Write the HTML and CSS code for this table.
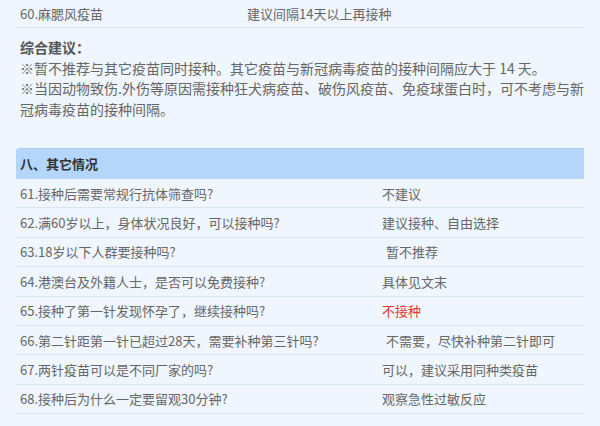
FILE: index.html
```html
<!DOCTYPE html>
<html lang="zh-CN">
<head>
<meta charset="utf-8">
<link rel="stylesheet" href="styles.css">
</head>
<body>
<div class="page">
  <div class="row row-top">
    <div class="q">60.麻腮风疫苗</div>
    <div class="a">建议间隔14天以上再接种</div>
  </div>
  <div class="advice">
    <div class="advice-title">综合建议：</div>
    <p>※暂不推荐与其它疫苗同时接种。其它疫苗与新冠病毒疫苗的接种间隔应大于 14 天。</p>
    <p>※当因动物致伤.外伤等原因需接种狂犬病疫苗、破伤风疫苗、免疫球蛋白时，可不考虑与新冠病毒疫苗的接种间隔。</p>
  </div>
  <div class="section-head">八、其它情况</div>
  <div class="table">
    <div class="row"><div class="q">61.接种后需要常规行抗体筛查吗?</div><div class="a">不建议</div></div>
    <div class="row"><div class="q">62.满60岁以上，身体状况良好，可以接种吗?</div><div class="a">建议接种、自由选择</div></div>
    <div class="row"><div class="q">63.18岁以下人群要接种吗?</div><div class="a indent">暂不推荐</div></div>
    <div class="row"><div class="q">64.港澳台及外籍人士，是否可以免费接种?</div><div class="a">具体见文末</div></div>
    <div class="row"><div class="q">65.接种了第一针发现怀孕了，继续接种吗?</div><div class="a red">不接种</div></div>
    <div class="row"><div class="q">66.第二针距第一针已超过28天，需要补种第三针吗?</div><div class="a indent">不需要，尽快补种第二针即可</div></div>
    <div class="row"><div class="q">67.两针疫苗可以是不同厂家的吗?</div><div class="a">可以，建议采用同种类疫苗</div></div>
    <div class="row"><div class="q">68.接种后为什么一定要留观30分钟?</div><div class="a">观察急性过敏反应</div></div>
  </div>
</div>
</body>
</html>
```

FILE: styles.css
```css
html, body {
  margin: 0;
  padding: 0;
  background: #eff6fd;
}
body {
  font-family: "Noto Sans CJK SC", "Noto Sans", sans-serif;
  font-size: 13px;
  color: #666;
}
.page {
  padding: 0 16px;
  width: 568px;
}
.row {
  display: grid;
  grid-template-columns: 366px 1fr;
  height: 28.375px;
  align-items: center;
  border-bottom: 1px solid #d9e5f1;
  white-space: nowrap;
}
.row .q {
  padding-left: 4px;
}
.row-top {
  height: 27px;
  grid-template-columns: 231px 1fr;
}
.a.indent {
  padding-left: 4px;
}
.a.red {
  color: #e8322f;
}
.advice {
  padding: 9px 0 0 4px;
  font-size: 14px;
  line-height: 20.5px;
}
.advice-title {
  font-weight: bold;
  color: #555;
}
.advice p {
  margin: 0;
}
.section-head {
  margin-top: 29px;
  height: 30px;
  line-height: 30px;
  background: #b5d6fb;
  border-top: 1px solid #a8ccf5;
  border-radius: 4px 0 0 0;
  padding-left: 4px;
  font-weight: bold;
  color: #333;
}
```
